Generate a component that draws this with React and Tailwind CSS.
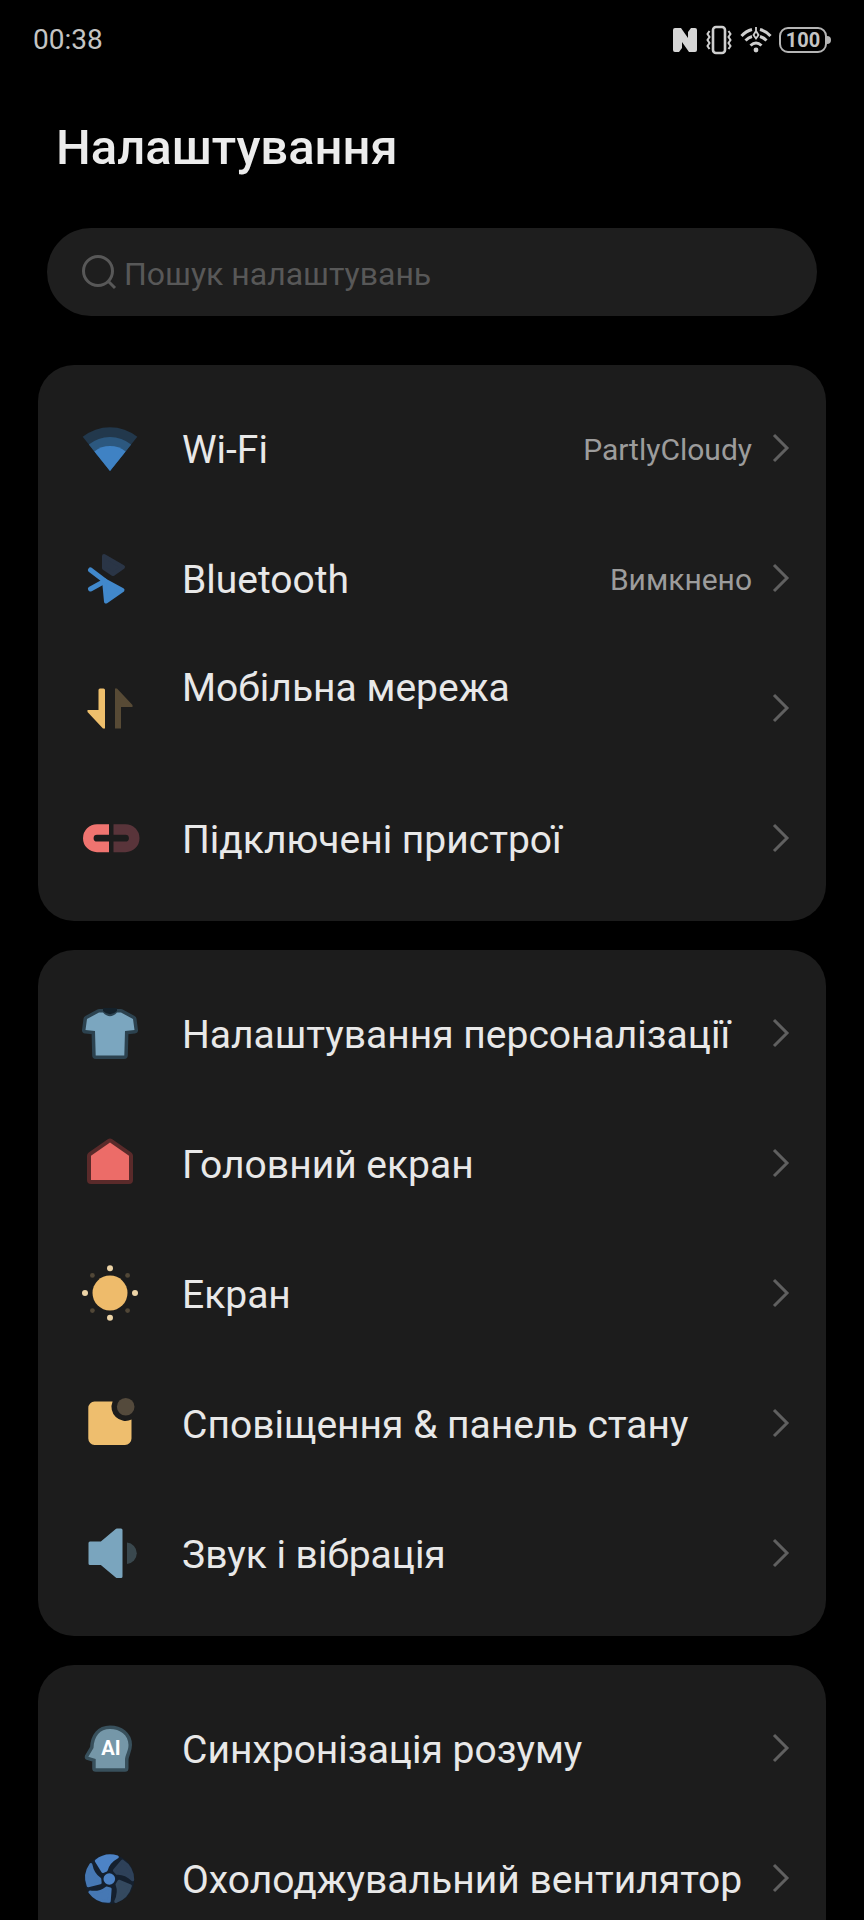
import React, { useState } from 'react';

function WifiIcon() {
    return (
        <>
            <path d="M30 53 L2.7 18.7 A44 44 0 0 1 57.3 18.7 Z" fill="#22384c" />
            <path d="M30 53 L8.8 26.4 A34 34 0 0 1 51.2 26.4 Z" fill="#2c587f" />
            <path d="M30 53 L14.4 33.4 A25 25 0 0 1 45.6 33.4 Z" fill="#3f82c4" />
        </>
    );
}

function BluetoothIcon() {
    return (
        <>
            <path d="M24 8 L43 19 L33 26 L24 20 Z" fill="#2a3546" stroke="#2a3546" strokeWidth="4" strokeLinejoin="round" />
            <path d="M10.5 22 L25 33 L10.5 41" fill="none" stroke="#4188cb" strokeWidth="5" strokeLinecap="round" strokeLinejoin="round" />
            <path d="M24 32 L42.5 42 L26 53.5 Z" fill="#4188cb" stroke="#4188cb" strokeWidth="4" strokeLinejoin="round" />
        </>
    );
}

function NetworkIcon() {
    return (
        <>
            <path d="M18.5 12 a1.5 1.5 0 0 1 1.5 -1.5 H23.5 a1.5 1.5 0 0 1 1.5 1.5 V50.5 H23 L7.5 34 V32 H18.5 Z" fill="#eebf6c" />
            <path d="M35 10.5 H37 L52.5 27 V29 H41 V50.5 H35 Z" fill="#574a35" />
        </>
    );
}

function MagnetIcon() {
    return (
        <>
            <path d="M29 21.5 H17 a8.7 8.7 0 0 0 0 17.4 H29" fill="none" stroke="#ef7470" strokeWidth="10.6" />
            <path d="M33.5 21.5 H45.5 a8.7 8.7 0 0 1 0 17.4 H33.5" fill="none" stroke="#59343a" strokeWidth="10.6" />
        </>
    );
}

function ShirtIcon() {
    const shape = 'M19 9.5 L23 9.5 Q30 17 37 9.5 L41 9.5 L53 16 L54.5 27 L45 28 L44.3 52.5 H15.7 L15 28 L5.5 27 L7 16 Z';
    return (
        <>
            <path d={shape} fill="#2c424f" stroke="#2c424f" strokeWidth="7" strokeLinejoin="round" />
            <path d={shape} fill="#7ba6bf" />
            <path d="M23 8 Q30 14.5 37 8 L37 5 H23 Z" fill="#14212a" />
        </>
    );
}

function HomeIcon() {
    const shape = 'M30 9.5 L49 22.7 V47 H11 V22.7 Z';
    return (
        <>
            <path d={shape} fill="#5a2a2a" stroke="#5a2a2a" strokeWidth="8" strokeLinejoin="round" />
            <path d={shape} fill="#ec6c68" />
        </>
    );
}

function SunIcon() {
    return (
        <>
            <circle cx="30" cy="30" r="17.5" fill="#eebb6b" />
            {[[30, 5.3], [30, 54.7], [5, 30], [55, 30]].map(([x, y]) => (
                <circle key={`${x}-${y}`} cx={x} cy={y} r="3" fill="#ecd3a6" />
            ))}
            {[[12.4, 12.4], [47.6, 12.4], [12.4, 47.6], [47.6, 47.6]].map(([x, y]) => (
                <circle key={`${x}-${y}`} cx={x} cy={y} r="2.4" fill="#514737" />
            ))}
        </>
    );
}

function NotificationIcon() {
    return (
        <>
            <path d="M14.5 8.5 H32.6 A14 14 0 0 0 51.5 26.6 V45.5 A6.5 6.5 0 0 1 45 52 H14.5 A6.5 6.5 0 0 1 8.3 45.5 V15 A6.5 6.5 0 0 1 14.5 8.5 Z" fill="#eebe6e" />
            <circle cx="45.7" cy="13.7" r="8.8" fill="#544a3c" />
        </>
    );
}

function SoundIcon() {
    return (
        <>
            <path d="M10 20 H21.5 L37 7 H41 V53.5 H37 L21.5 40.5 H10 Z" fill="#7aa5be" stroke="#7aa5be" strokeWidth="3" strokeLinejoin="round" />
            <path d="M47 19.5 A10.8 10.8 0 0 1 47 41 Z" fill="#3a484e" />
        </>
    );
}

function MindIcon() {
    const shape = 'M30 11 C40 11 48.5 17 48.5 27 C48.5 33 45 37 45 42 V50.3 H15.7 V41 L8.3 38.7 L13.5 30 C14 18 20 11 30 11 Z';
    return (
        <>
            <path d={shape} fill="#38505c" stroke="#38505c" strokeWidth="7" strokeLinejoin="round" />
            <path d={shape} fill="#7597a8" />
            <text x="31" y="37" textAnchor="middle" fontSize="20" fontWeight="700" fill="#ffffff">AI</text>
        </>
    );
}

function FanIcon() {
    const blades = [
        [0, '#4d83c6'],
        [72, '#2e4159'],
        [144, '#34495f'],
        [216, '#4678b4'],
        [288, '#4678b4'],
    ];
    return (
        <g transform="translate(29.3 31)">
            <circle r="25" fill="#15202e" />
            {blades.map(([angle, color]) => (
                <path
                    key={angle}
                    d="M-13 -18 A22.5 22.5 0 0 1 8 -22 Q-1 -17 -3 -9 L-6.5 -7.5 Z"
                    fill={color}
                    stroke={color}
                    strokeWidth="3"
                    strokeLinejoin="round"
                    transform={`rotate(${angle})`}
                />
            ))}
            <circle r="5.8" fill="#4d83c6" />
        </g>
    );
}

const groups = [
    [
        { label: 'Wi-Fi', value: 'PartlyCloudy', Icon: WifiIcon },
        { label: 'Bluetooth', value: 'Вимкнено', Icon: BluetoothIcon },
        { label: 'Мобільна мережа', hasSubtitle: true, Icon: NetworkIcon },
        { label: 'Підключені пристрої', Icon: MagnetIcon },
    ],
    [
        { label: 'Налаштування персоналізації', Icon: ShirtIcon },
        { label: 'Головний екран', Icon: HomeIcon },
        { label: 'Екран', Icon: SunIcon },
        { label: 'Сповіщення & панель стану', Icon: NotificationIcon },
        { label: 'Звук і вібрація', Icon: SoundIcon },
    ],
    [
        { label: 'Синхронізація розуму', Icon: MindIcon },
        { label: 'Охолоджувальний вентилятор', Icon: FanIcon },
    ],
];

function StatusBar() {
    return (
        <div className="flex items-center justify-between px-[33px] pt-5 text-[#c4c4c4]">
            <span className="text-[28px] leading-10">00:38</span>
            <div className="flex h-10 items-center gap-[7px]">
                <svg width="26" height="26" viewBox="0 0 26 26" fill="#d6d6d6" aria-hidden="true">
                    <path d="M3 1 H9 L16 11 V5 L19 1 H23 Q25 1 25 3 V23 Q25 25 23 25 H17 L10 15 V21 L7 25 H3 Q1 25 1 23 V3 Q1 1 3 1 Z" />
                </svg>
                <svg width="28" height="30" viewBox="0 0 28 30" fill="none" stroke="#cfcfcf" aria-hidden="true">
                    <rect x="8" y="2" width="12" height="26" rx="3" strokeWidth="2.6" />
                    <path d="M4.5 6 L2.5 9 L4.5 12 L2.5 15 L4.5 18 L2.5 21 L4.5 24" strokeWidth="2" />
                    <path d="M23.5 6 L25.5 9 L23.5 12 L25.5 15 L23.5 18 L25.5 21 L23.5 24" strokeWidth="2" />
                </svg>
                <svg width="32" height="28" viewBox="0 0 32 28" fill="none" stroke="#cfcfcf" aria-hidden="true">
                    <path d="M1.5 10 Q6 5 12 3.5 M20 3.5 Q26 5 30.5 10" strokeWidth="3" />
                    <path d="M5.5 14.5 Q8.5 11.5 12 10.5 M20 10.5 Q23.5 11.5 26.5 14.5" strokeWidth="3" />
                    <path d="M10.5 19.5 Q16 14.5 21.5 19.5" strokeWidth="3" />
                    <path d="M16 1 V5 M16 5 L13.5 9 L16 12.5 L18.5 9 Z" strokeWidth="1.8" />
                    <circle cx="16" cy="24" r="2.4" fill="#cfcfcf" stroke="none" />
                </svg>
                <div className="flex items-center">
                    <span className="flex h-[26px] w-12 items-center justify-center rounded-[9px] border-2 border-[#b5b5b5] text-[20px] leading-5 font-bold">100</span>
                    <span className="h-2 w-1 rounded-r-sm bg-[#b5b5b5]" />
                </div>
            </div>
        </div>
    );
}

function SettingsRow({ label, value, hasSubtitle, Icon }) {
    return (
        <li>
            <a href="#" className="flex h-[130px] items-center pr-9 pl-[42px]">
                <svg width="60" height="60" viewBox="0 0 60 60" className="mr-[42px] shrink-0" aria-hidden="true">
                    <Icon />
                </svg>
                <span className="flex-1 pt-1 text-[39px] leading-10 whitespace-nowrap text-[#e8e8e8]">
                    {label}
                    {hasSubtitle && <span className="block h-11" />}
                </span>
                {value && <span className="mr-5 pt-1 text-[30px] leading-10 text-[#9c9c9c]">{value}</span>}
                <svg width="18" height="30" viewBox="0 0 18 30" fill="none" stroke="#606060" strokeWidth="3" className="shrink-0" aria-hidden="true">
                    <path d="M2 2 L15 15 L2 28" />
                </svg>
            </a>
        </li>
    );
}

export default function App() {
    const [query, setQuery] = useState('');

    return (
        <div className="h-screen overflow-hidden bg-black font-['Roboto',sans-serif]">
            <StatusBar />

            <h1 className="mt-[58px] px-14 text-[49px] leading-[60px] font-medium text-[#ececec]">Налаштування</h1>

            <label className="mx-[47px] mt-[50px] flex h-[88px] items-center gap-[7px] rounded-full bg-[#1e1e1e] pr-8 pl-[34px]">
                <svg width="36" height="36" viewBox="0 0 36 36" fill="none" stroke="#585858" strokeWidth="3" aria-hidden="true">
                    <circle cx="17" cy="17" r="14.5" />
                    <path d="M27 27 L34 34" />
                </svg>
                <input
                    type="search"
                    value={query}
                    onChange={(e) => setQuery(e.target.value)}
                    placeholder="Пошук налаштувань"
                    aria-label="Пошук налаштувань"
                    className="min-w-0 flex-1 bg-transparent pt-1 text-[32px] leading-10 text-[#e8e8e8] outline-none placeholder:text-[#585858]"
                />
            </label>

            <main className="mx-[38px] mt-[49px] flex flex-col gap-[29px]">
                {groups.map((rows, i) => (
                    <ul key={i} className="rounded-[36px] bg-[#1c1c1c] py-[18px]">
                        {rows.map((row) => (
                            <SettingsRow key={row.label} {...row} />
                        ))}
                    </ul>
                ))}
            </main>
        </div>
    );
}
